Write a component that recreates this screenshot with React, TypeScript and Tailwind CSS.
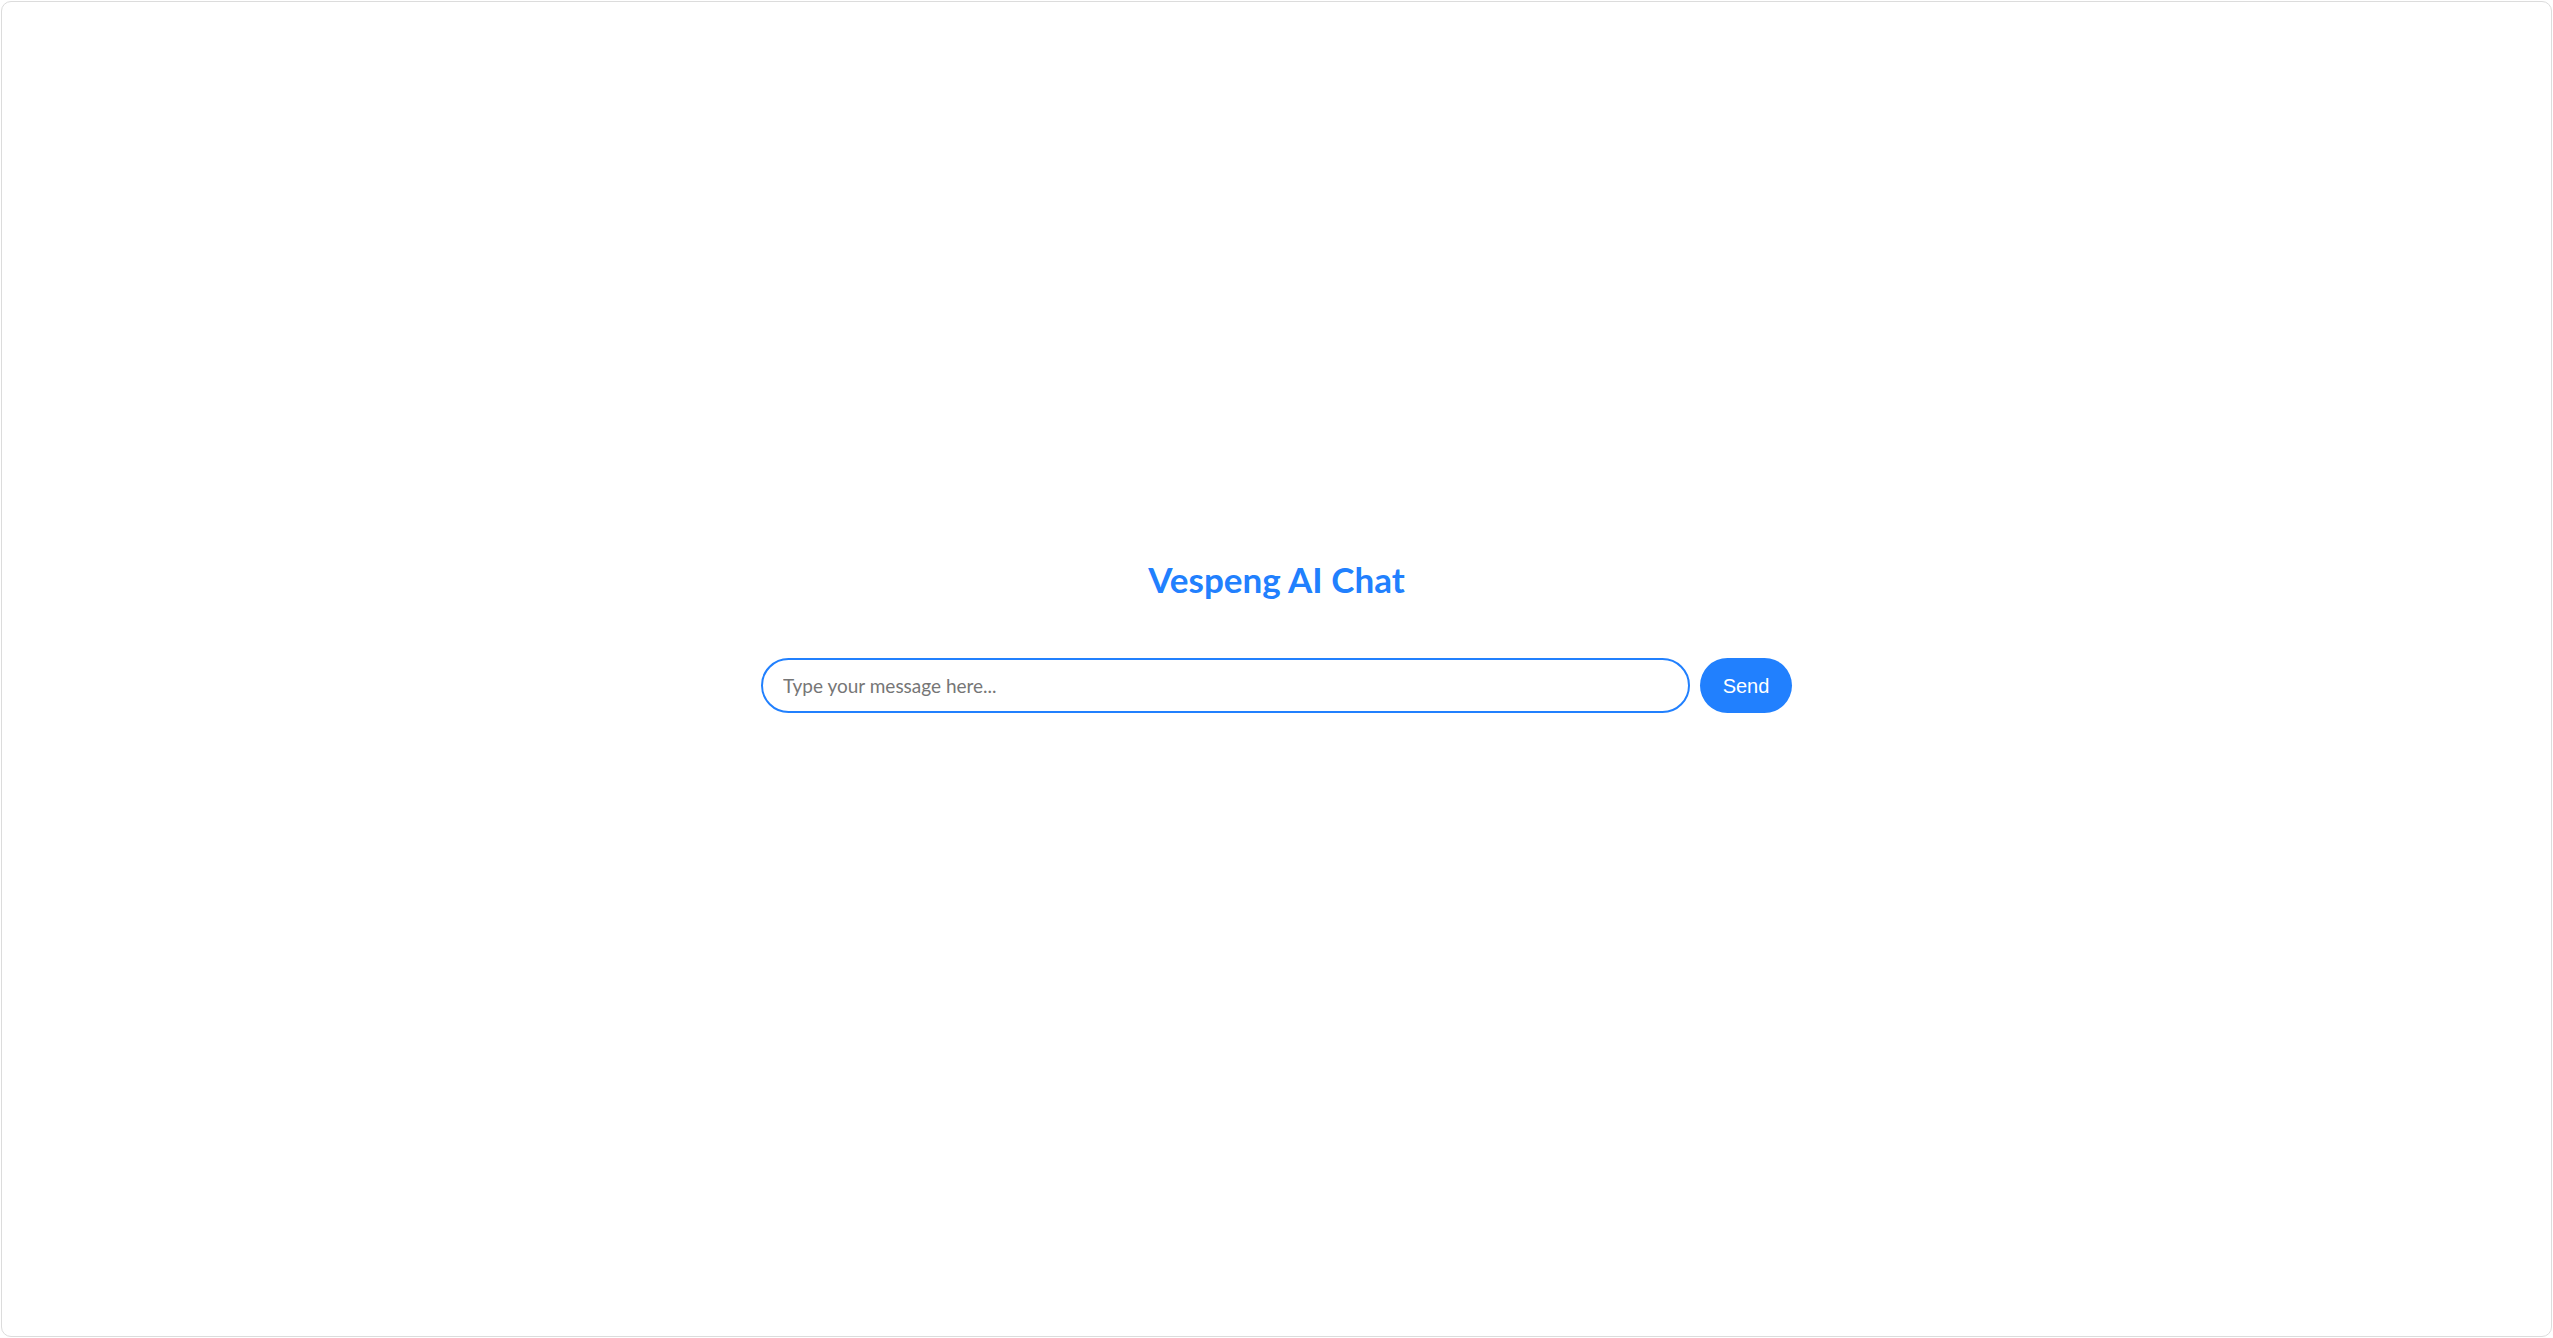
import { useState } from "react";

export default function App() {
  const [message, setMessage] = useState("");

  return (
    <div className="h-screen w-full bg-white p-px">
      <div className="flex h-full w-full flex-col items-center rounded-[10px] border border-[#dcdcdc] bg-white pt-[555px]">
        <h1 className="font-['Lato',sans-serif] text-[35px] leading-[44px] font-bold text-[#2180fe]">
          Vespeng AI Chat
        </h1>
        <div className="mt-[57px] flex items-center gap-[10px]">
          <input
            value={message}
            onChange={(e) => setMessage(e.target.value)}
            placeholder="Type your message here..."
            className="h-[55px] w-[929px] rounded-full border-2 border-[#2180fe] bg-white px-[20px] font-['Lato',sans-serif] text-[19px] text-gray-800 outline-none placeholder:text-[#767676]"
          />
          <button
            type="button"
            className="h-[55px] w-[92px] rounded-full bg-[#2180fe] font-['Liberation_Sans',Arial,sans-serif] text-[20px] text-white"
          >
            Send
          </button>
        </div>
      </div>
    </div>
  );
}
